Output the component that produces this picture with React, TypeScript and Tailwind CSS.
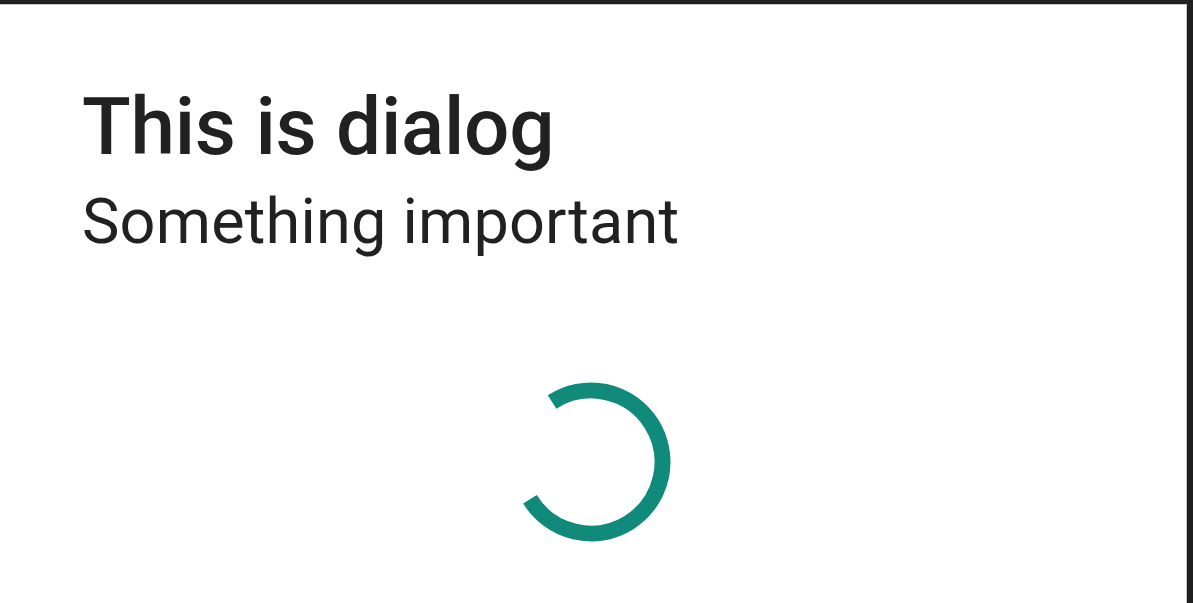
import React from "react";

function Spinner() {
  // arc from -123deg clockwise to 148.6deg, r=71.5, stroke 16
  const cx = 80;
  const cy = 80;
  const r = 71.5;
  const a0 = (-123 * Math.PI) / 180;
  const a1 = (148.6 * Math.PI) / 180;
  const x0 = cx + r * Math.cos(a0);
  const y0 = cy + r * Math.sin(a0);
  const x1 = cx + r * Math.cos(a1);
  const y1 = cy + r * Math.sin(a1);
  return (
    <svg width="160" height="160" viewBox="0 0 160 160" className="block">
      <path
        d={`M ${x0} ${y0} A ${r} ${r} 0 1 1 ${x1} ${y1}`}
        fill="none"
        stroke="#108a7b"
        strokeWidth="16"
      />
    </svg>
  );
}

export default function App() {
  return (
    <div className="flex h-screen w-full flex-col bg-[#1f1f1f] pt-[4px] pr-[6px]">
      <div className="flex flex-1 flex-col border-t border-r border-[#c8c8c8] bg-white font-['Roboto',sans-serif] text-[#212121]">
        <div className="pl-[82px] pt-[74px]">
          <h1 className="text-[80px] font-medium leading-[96px] tracking-[-0.25px]">This is dialog</h1>
          <p className="mt-[11px] text-[63px] leading-[72px] tracking-[0.2px]">Something important</p>
        </div>
        <div className="flex justify-center pt-[124px] pr-[5px]">
          <Spinner />
        </div>
      </div>
    </div>
  );
}
